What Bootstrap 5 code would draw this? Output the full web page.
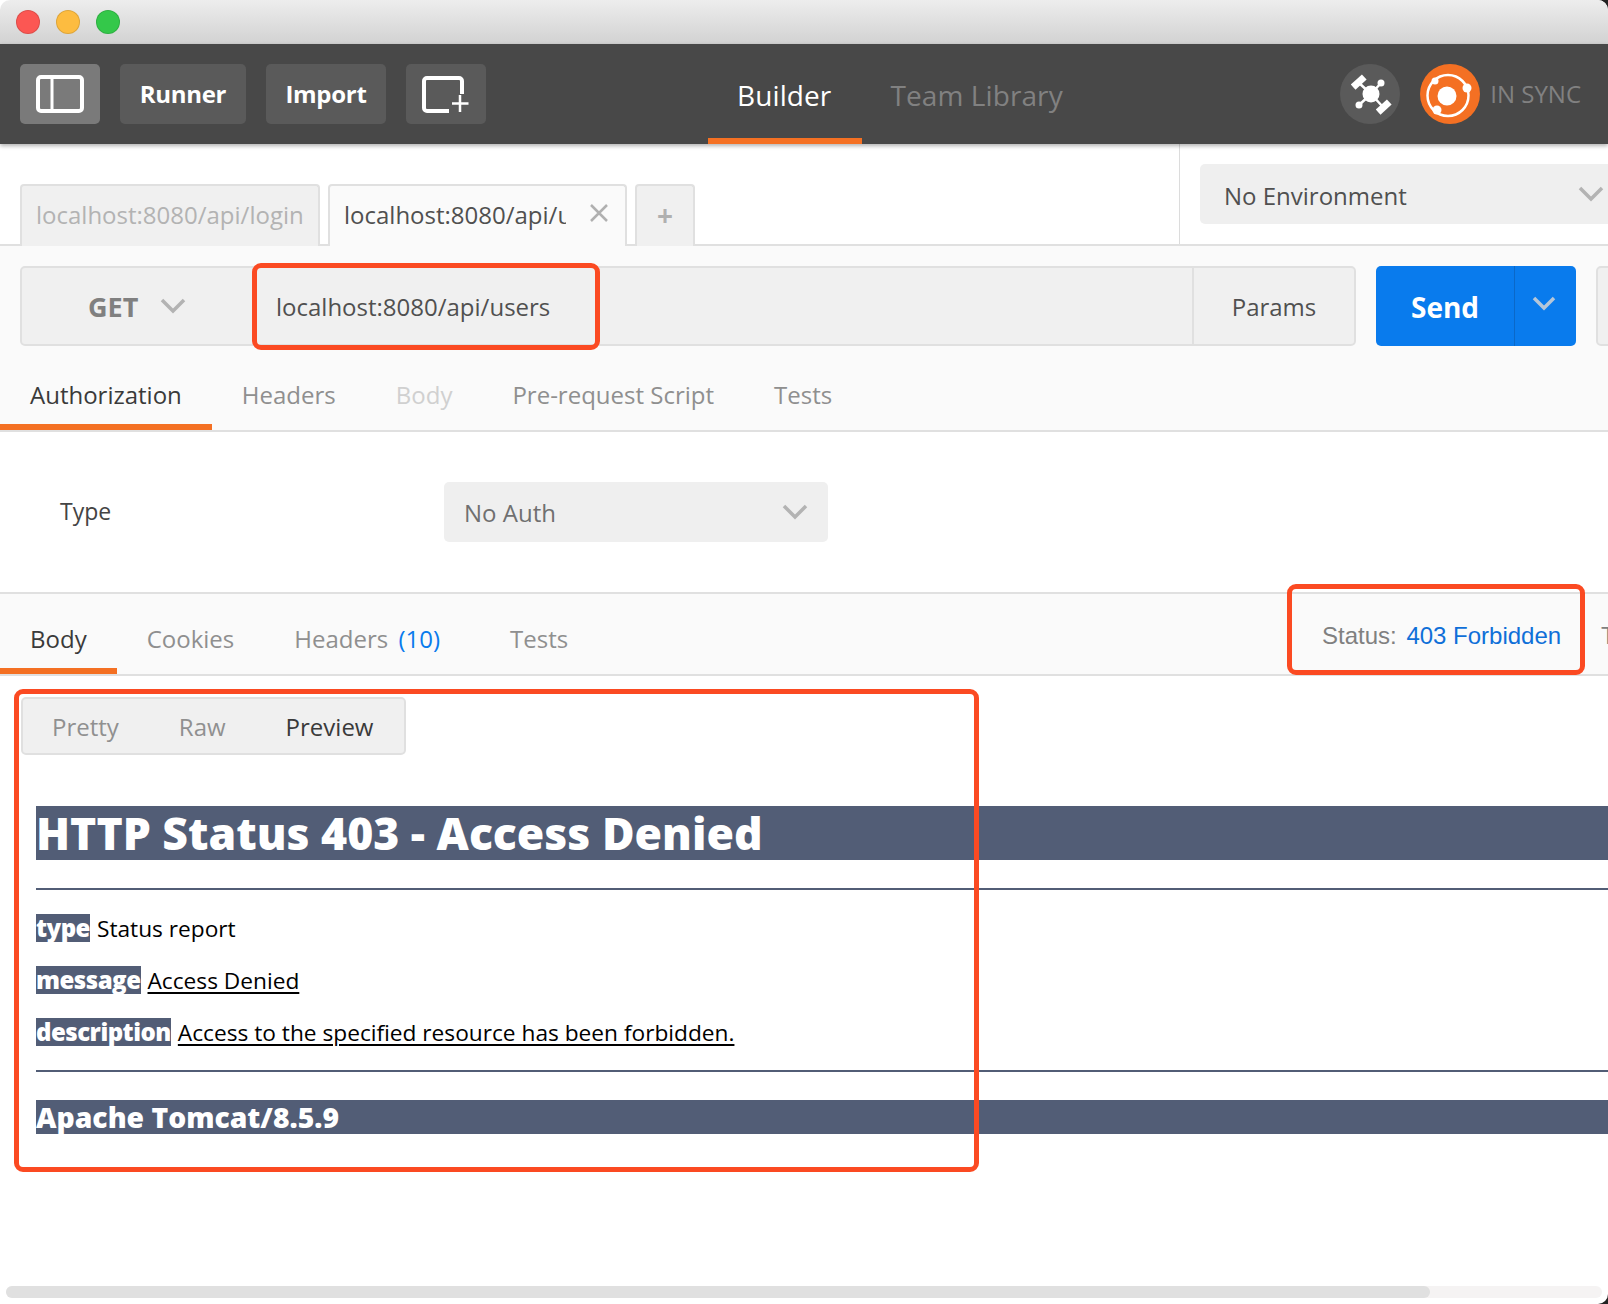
<!DOCTYPE html>
<html lang="en"><head><meta charset="utf-8"><title>Postman</title>
<link href="https://cdn.jsdelivr.net/npm/bootstrap@5.3.0/dist/css/bootstrap.min.css" rel="stylesheet">
<style>
html,body{margin:0;height:1304px;overflow:hidden;background:#fff}
body{font-family:"Open Sans","Noto Sans",sans-serif;color:#505050;width:1608px;position:relative;background:linear-gradient(to right,#fff 50%,#222 50%)}
.app-win{width:1608px;height:1304px;overflow:hidden;position:relative;background:#fff;border-radius:10px}
.title-strip{height:44px;background:linear-gradient(#ededed,#d2d2d2);padding:10px 16px;gap:16px}
.light{width:24px;height:24px;border-radius:50%;border:1px solid rgba(0,0,0,.12)}
.tool-strip{height:100px;background:#484848;padding:20px;box-shadow:0 2px 4px rgba(0,0,0,.3);position:relative;z-index:2}
.tool-btn{height:60px;background:#5a5a5a;border:0;border-radius:5px;color:#fff;font-weight:700;font-size:24px;letter-spacing:-.3px;padding:0;margin-right:20px;line-height:60px;--bs-btn-hover-bg:#5a5a5a;--bs-btn-hover-color:#fff}
.tool-active{background:#7a7a7a}
.w-icon{width:80px}.w-runner{width:126px}.w-import{width:120px}
.mode-tabs{margin-left:202px;height:80px;margin-bottom:-20px}
.mode-tab{font-size:28px;line-height:62px;height:80px;color:#fff;padding:0 31px 0 29px;text-decoration:none;letter-spacing:.1px}
.mode-on{border-bottom:6px solid #f47023}
.mode-off{color:#818181;padding-left:28px}
.round-ico{width:60px;height:60px;border-radius:50%;background:#5a5a5a;display:block}
.sync-ico{background:#f47023;margin-left:20px}
.sync-word{font-size:24px;color:#818181;margin-left:10px;margin-right:7px}
.tab-strip{height:102px;border-bottom:2px solid #e0e0e0;background:#fff}
.tabs-side{width:1180px;padding:40px 0 0 20px;gap:8px;height:100px;border-right:1px solid #dcdcdc;flex-shrink:0}
.req-tab{height:62px;margin-bottom:-2px;border:2px solid #e0e0e0;border-bottom:0;border-radius:4px 4px 0 0;font-size:24px;line-height:58px;white-space:nowrap;overflow:hidden;position:relative;z-index:1}
.tab-one{width:300px;background:#f0f0f0;color:#b3b3b3;padding-left:14px}
.tab-two{width:299px;background:#fafafa;color:#505050;padding-left:14px}
.tab-add{width:60px;background:#f0f0f0;color:#b0b0b0;text-align:center;font-weight:700;font-size:28px}
.tab-clip{width:222px;overflow:hidden;display:block}
.tab-x{position:absolute;right:16px;top:17px}
.env-side{padding:20px 0 0 20px;flex:1}
.sel-box{background:#efefef;border-radius:5px;height:60px;font-size:24px;color:#505050}
.env-text{padding-top:4px}
.auth-text{padding-top:1px}
.env-box{width:420px;padding-left:24px}
.req-area{background:#fafafa;height:186px;border-bottom:2px solid #e0e0e0}
.req-row{padding:20px 0 0 20px;height:100px}
.url-group{width:1336px;height:80px;background:#f0f0f0;border:2px solid #e0e0e0;border-radius:5px}
.verb{width:229px;padding-left:66px;font-weight:700;font-size:27px;color:#808080;gap:22px}
.verb-word{padding-top:3px}
.url-word{padding-top:1px}
.url-val{font-size:24px;color:#505050;padding-left:25px;flex:1}
.param-cell{width:162px;border-left:2px solid #e0e0e0;font-size:24px;text-align:center;line-height:78px}
.send-main{width:139px;height:80px;margin-left:20px;background:#097bed;color:#fff;font-weight:700;font-size:28px;border-radius:5px 0 0 5px;text-align:center;line-height:82px;border-right:1px solid #0a68c8}
.send-drop{width:61px;height:80px;background:#097bed;border-radius:0 5px 5px 0;padding:0 4px 4px 0}
.save-stub{width:40px;height:80px;margin-left:20px;background:#f0f0f0;border:2px solid #e0e0e0;border-radius:5px}
.sub-tabs{height:86px;padding:0}
.sub-tab{font-size:24px;color:#8f8f8f;text-decoration:none;padding:9px 30px 0;line-height:80px;height:84px;white-space:nowrap}
.sub-on{color:#3a3a3a;border-bottom:6px solid #f47023}
.sub-dim{color:#d0d0d0}
.auth-area{height:160px;padding:50px 0 0 60px}
.type-lbl{font-size:23px;width:384px;line-height:58px;color:#444}
.auth-box{width:384px;padding-left:20px;color:#707070;position:relative}
.res-strip{height:84px;background:#fafafa;border-top:2px solid #e0e0e0;border-bottom:2px solid #e0e0e0;position:relative}
.res-tab{height:80px;line-height:90px;font-size:24px;color:#8f8f8f;text-decoration:none;padding:0 30px;white-space:nowrap}
.res-on{color:#3a3a3a;border-bottom:6px solid #f47023}
.count{color:#097bed;margin-left:4px;margin-right:10px}
.res-status{position:absolute;left:1322px;top:24px;font-family:"Liberation Sans",Arial,sans-serif;font-size:24px;color:#808080;white-space:nowrap;line-height:36px}
.res-status b{font-weight:400;color:#0f6fd8;margin-left:3px}
.res-more{position:absolute;left:1601px;top:24px;font-family:"Liberation Sans",Arial,sans-serif;font-size:24px;color:#808080;line-height:36px}
.res-body{padding:21px 0 0 21px}
.view-switch{width:385px;height:58px;background:#f0f0f0;border:2px solid #e0e0e0;border-radius:5px;font-size:24px;line-height:56px;color:#909090}
.view-switch span{display:block}
.v-a{margin-left:29px}.v-b{margin-left:60px}.v-c{margin-left:60px;color:#3a3a3a}
.page-doc{margin:51px 0 0 15px;color:#000}
.doc-head{background:#525d76;color:#fff;font-weight:800;font-size:44.500px;height:54px;line-height:54px;white-space:nowrap;margin:0}
.doc-rule{height:2px;background:#525d76;margin:28px 0 24px;opacity:1;border:0}
.doc-line{height:28px;line-height:28px;margin:0 0 24px;font-size:22.700px;white-space:nowrap}
.doc-tag{background:#525d76;color:#fff;font-weight:800;font-size:24px;letter-spacing:-.5px;display:inline-block;height:28px;margin-right:7px}
.doc-line u{text-underline-offset:3px}
.doc-foot{background:#525d76;color:#fff;font-weight:800;font-size:28.300px;height:34px;line-height:34px;white-space:nowrap;margin:0}
.doc-rule2{margin:0 0 28px}
.scroll-rail{position:absolute;left:6px;top:1286px;width:1596px;height:12px;background:#f5f3f3;border-radius:6px}
.scroll-thumb{width:1424px;height:12px;background:#e0e0e0;border-radius:6px}
.red-mark{position:absolute;border:5px solid #fb4a22;border-radius:9px;z-index:5;pointer-events:none}
.mark-url{left:252px;top:263px;width:348px;height:87px}
.mark-status{left:1287px;top:584px;width:298px;height:91px}
.mark-body{left:14px;top:689px;width:965px;height:483px}
</style></head><body>
<div class="app-win">
  <div class="title-strip d-flex">
    <span class="light" style="background:#fc5753"></span>
    <span class="light" style="background:#fdbc40"></span>
    <span class="light" style="background:#34c84a"></span>
  </div>
  <div class="tool-strip d-flex align-items-start">
    <button class="btn tool-btn tool-active w-icon d-flex align-items-center justify-content-center" aria-label="Sidebar">
      <svg width="48" height="38" viewBox="0 0 48 38"><rect x="2" y="2" width="44" height="34" rx="3" fill="none" stroke="#fff" stroke-width="4"/><path d="M16 2v34" stroke="#fff" stroke-width="3"/></svg>
    </button>
    <button class="btn tool-btn w-runner">Runner</button>
    <button class="btn tool-btn w-import">Import</button>
    <button class="btn tool-btn w-icon d-flex align-items-center justify-content-center" aria-label="New">
      <svg width="48" height="40" viewBox="0 0 48 40"><path d="M27 37H5a3 3 0 0 1-3-3V7a3 3 0 0 1 3-3h32a3 3 0 0 1 3 3v13" fill="none" stroke="#fff" stroke-width="4"/><path d="M38 21v17M30 29.500h16.500" stroke="#fff" stroke-width="2.500"/></svg>
    </button>
    <div class="mode-tabs d-flex">
      <a class="mode-tab mode-on" href="#">Builder</a>
      <a class="mode-tab mode-off" href="#">Team Library</a>
    </div>
    <div class="ms-auto d-flex align-items-center" style="height:60px">
      <svg class="round-ico" viewBox="0 0 60 60"><circle cx="31" cy="30" r="8.500" fill="#fff"/><path d="M31 30 18 18M31 30 43 43M31 30 41 19M31 30 19 41" stroke="#fff" stroke-width="2.500"/><rect x="11" y="15" width="15" height="7" transform="rotate(-42 18 18)" fill="#fff"/><rect x="36" y="40" width="15" height="7" transform="rotate(-42 43 43)" fill="#fff"/><circle cx="41" cy="19" r="3.500" fill="#fff"/><circle cx="19" cy="41" r="3.500" fill="#fff"/></svg>
      <svg class="round-ico sync-ico" viewBox="0 0 60 60"><circle cx="28" cy="31.500" r="20.500" fill="none" stroke="#fff" stroke-width="2.500"/><circle cx="27" cy="32" r="9.500" fill="#fff"/><circle cx="15" cy="17" r="3.500" fill="#fff"/><circle cx="47" cy="24" r="4.500" fill="#fff"/><circle cx="17" cy="46" r="4.500" fill="#fff"/></svg>
      <span class="sync-word">IN SYNC</span>
    </div>
  </div>
  <div class="tab-strip d-flex">
    <div class="tabs-side d-flex">
      <div class="req-tab tab-one">localhost:8080/api/login</div>
      <div class="req-tab tab-two"><span class="tab-clip">localhost:8080/api/users</span>
        <svg class="tab-x" width="20" height="20" viewBox="0 0 20 20"><path d="M2 2l16 16M18 2 2 18" stroke="#b0b0b0" stroke-width="2.500"/></svg></div>
      <div class="req-tab tab-add">+</div>
    </div>
    <div class="env-side">
      <div class="sel-box env-box d-flex align-items-center"><span class="env-text">No Environment</span>
        <svg style="margin-left:auto;margin-right:16px" width="26" height="16" viewBox="0 0 26 16"><path d="M2 2l11 11L24 2" fill="none" stroke="#b3b3b3" stroke-width="3.500"/></svg>
      </div>
    </div>
  </div>
  <div class="req-area">
    <div class="req-row d-flex">
      <div class="url-group d-flex align-items-center flex-shrink-0">
        <div class="verb d-flex align-items-center"><span class="verb-word">GET</span>
          <svg width="26" height="16" viewBox="0 0 26 16"><path d="M2 2l11 11L24 2" fill="none" stroke="#b3b3b3" stroke-width="3.500"/></svg></div>
        <div class="url-val"><span class="url-word d-block">localhost:8080/api/users</span></div>
        <div class="param-cell align-self-stretch">Params</div>
      </div>
      <div class="send-main flex-shrink-0">Send</div>
      <div class="send-drop d-flex align-items-center justify-content-center flex-shrink-0">
        <svg width="24" height="16" viewBox="0 0 24 16"><path d="M2 2l10 10L22 2" fill="none" stroke="#b5c6d8" stroke-width="3.500"/></svg></div>
      <div class="save-stub flex-shrink-0"></div>
    </div>
    <div class="sub-tabs d-flex">
      <a class="sub-tab sub-on" href="#">Authorization</a>
      <a class="sub-tab" href="#">Headers</a>
      <a class="sub-tab sub-dim" href="#">Body</a>
      <a class="sub-tab" href="#">Pre-request Script</a>
      <a class="sub-tab" href="#">Tests</a>
    </div>
  </div>
  <div class="auth-area d-flex">
    <div class="type-lbl">Type</div>
    <div class="sel-box auth-box d-flex align-items-center"><span class="auth-text">No Auth</span>
      <svg style="margin-left:auto;margin-right:20px" width="26" height="16" viewBox="0 0 26 16"><path d="M2 2l11 11L24 2" fill="none" stroke="#b3b3b3" stroke-width="3.500"/></svg>
    </div>
  </div>
  <div class="res-strip d-flex">
    <a class="res-tab res-on" href="#">Body</a>
    <a class="res-tab" href="#">Cookies</a>
    <a class="res-tab" href="#">Headers <span class="count">(10)</span></a>
    <a class="res-tab" href="#">Tests</a>
    <div class="res-status">Status: <b>403 Forbidden</b></div>
    <div class="res-more">T</div>
  </div>
  <div class="res-body">
    <div class="view-switch d-flex"><span class="v-a">Pretty</span><span class="v-b">Raw</span><span class="v-c">Preview</span></div>
    <div class="page-doc">
      <h1 class="doc-head">HTTP Status 403 - Access Denied</h1>
      <hr class="doc-rule">
      <p class="doc-line"><span class="doc-tag">type</span>Status report</p>
      <p class="doc-line"><span class="doc-tag">message</span><u>Access Denied</u></p>
      <p class="doc-line"><span class="doc-tag">description</span><u>Access to the specified resource has been forbidden.</u></p>
      <hr class="doc-rule doc-rule2">
      <h3 class="doc-foot">Apache Tomcat/8.5.9</h3>
    </div>
  </div>
  <div class="scroll-rail"><div class="scroll-thumb"></div></div>
  <div class="red-mark mark-url"></div>
  <div class="red-mark mark-status"></div>
  <div class="red-mark mark-body"></div>
</div>
<script src="https://cdn.jsdelivr.net/npm/bootstrap@5.3.0/dist/js/bootstrap.bundle.min.js"></script>
</body></html>
